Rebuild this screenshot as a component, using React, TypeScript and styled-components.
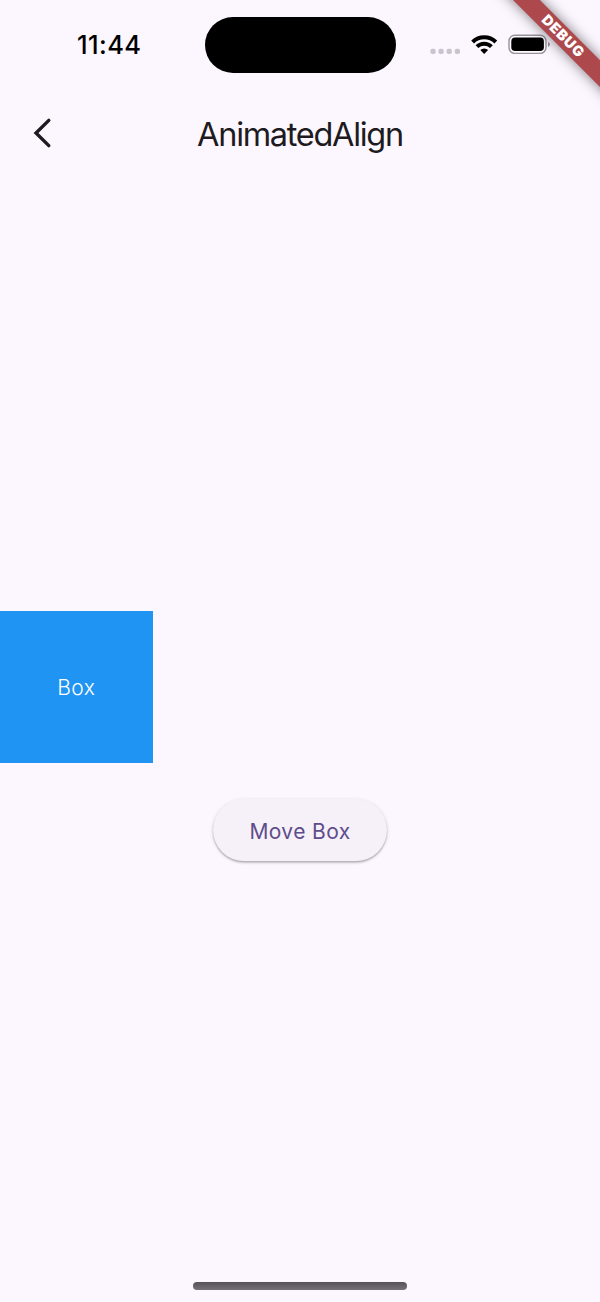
import React from "react";
import styled, { createGlobalStyle } from "styled-components";

const GlobalStyle = createGlobalStyle`
  html, body { margin: 0; padding: 0; background: #fcf6fe; }
  * { box-sizing: border-box; }
`;

const Screen = styled.main`
  position: relative;
  width: 600px;
  height: 1302px;
  overflow: hidden;
  display: flex;
  flex-direction: column;
  background: #fcf6fe;
  color: #1d1b20;
  font-family: Inter, "Liberation Sans", sans-serif;
`;

const StatusBar = styled.header`
  display: grid;
  grid-template-columns: 204.5px 191px 1fr;
  height: 90px;
  align-items: center;
`;

const Clock = styled.time`
  padding-left: 14px;
  text-align: center;
  font-size: 25.5px;
  font-weight: 540;
  line-height: 30px;
  letter-spacing: 0.4px;
  color: #000;
`;

const Island = styled.div`
  height: 56px;
  border-radius: 28px;
  background: #000;
`;

const Indicators = styled.div`
  display: flex;
  align-items: center;
  padding-left: 34px;
`;

const AppBar = styled.nav`
  display: grid;
  grid-template-columns: 86px 1fr 86px;
  align-items: center;
  height: 86px;
`;

const BackButton = styled.button`
  display: flex;
  align-items: center;
  justify-content: center;
  height: 86px;
  padding: 0 2px 0 0;
  border: 0;
  background: none;
  color: inherit;
`;

const Title = styled.h1`
  margin: 0;
  padding-top: 3px;
  text-align: center;
  font-size: 32.5px;
  font-weight: 380;
  line-height: 42px;
  letter-spacing: -1.3px;
  white-space: nowrap;
`;

const Body = styled.section`
  flex: 1;
  display: flex;
  flex-direction: column;
  padding-top: 434.5px;
`;

const AlignArea = styled.div`
  display: flex;
  justify-content: flex-start;
`;

const Box = styled.div`
  display: flex;
  align-items: center;
  justify-content: center;
  width: 152.7px;
  height: 152.7px;
  padding-top: 2px;
  background: #2094f3;
  color: #fff;
  font-size: 21px;
  font-weight: 350;
  letter-spacing: 0.5px;
`;

const MoveButton = styled.button`
  align-self: center;
  width: 174px;
  height: 62px;
  margin-top: 36px;
  padding: 2px 0 0;
  border: 0;
  border-radius: 31px;
  background: #f6f0f8;
  box-shadow: 0 1.5px 2px rgba(0, 0, 0, 0.26), 0 1px 4px rgba(0, 0, 0, 0.1);
  color: #5f4c8c;
  font-family: inherit;
  font-size: 21px;
  font-weight: 440;
  letter-spacing: 0.4px;
  white-space: nowrap;
`;

const HomeIndicator = styled.div`
  align-self: center;
  width: 214px;
  height: 8px;
  margin-bottom: 12px;
  border-radius: 4px;
  background: linear-gradient(#565058, #756f78);
`;

const DebugBanner = styled.div`
  position: absolute;
  top: 27px;
  left: 463.4px;
  width: 200px;
  height: 18.6px;
  transform: rotate(45deg);
  background: #ad484d;
  box-shadow: 0 0 13px rgba(0, 0, 0, 0.5);
  color: #fff;
  text-align: center;
  font-size: 14.4px;
  font-weight: 900;
  line-height: 18.6px;
  letter-spacing: 0.7px;
`;

const StatusIcons = () => (
  <svg width="124" height="30" viewBox="430 30 124 30" aria-hidden="true">
    <g fill="#cbc4ce">
      {[430.4, 438.5, 446.6, 454.8].map((x) => (
        <rect key={x} x={x} y="48.8" width="5.2" height="5.2" rx="1.8" />
      ))}
    </g>
    <g fill="none" stroke="#000" strokeWidth="4">
      <path d="M472.6 42A16.6 16.6 0 0 1 495.8 42" />
      <path d="M477 46.6A10.3 10.3 0 0 1 491.4 46.6" />
    </g>
    <path d="M480.3 50A5.6 5.6 0 0 1 488.1 50L484.2 54Z" fill="#000" />
    <rect x="509" y="35.2" width="37" height="18.2" rx="5.8" fill="#fff" fillOpacity="0.55" stroke="#97919b" strokeWidth="1.4" />
    <rect x="511.3" y="37.6" width="32.6" height="13.4" rx="3.8" fill="#000" />
    <path d="M548 41.7Q550 42.7 550 44.3T548 46.9Z" fill="#97919b" />
  </svg>
);

const BackIcon = () => (
  <svg width="20" height="32" viewBox="0 0 20 32" aria-hidden="true">
    <path d="M16.8 3.4L4 16L16.8 28.6" fill="none" stroke="currentColor" strokeWidth="3.4" strokeLinecap="round" strokeLinejoin="miter" />
  </svg>
);

export default function App() {
  return (
    <>
      <GlobalStyle />
      <Screen>
        <StatusBar>
          <Clock>11:44</Clock>
          <Island />
          <Indicators><StatusIcons /></Indicators>
        </StatusBar>
        <AppBar>
          <BackButton aria-label="Back"><BackIcon /></BackButton>
          <Title>AnimatedAlign</Title>
        </AppBar>
        <Body>
          <AlignArea><Box>Box</Box></AlignArea>
          <MoveButton>Move Box</MoveButton>
        </Body>
        <HomeIndicator />
        <DebugBanner>DEBUG</DebugBanner>
      </Screen>
    </>
  );
}
